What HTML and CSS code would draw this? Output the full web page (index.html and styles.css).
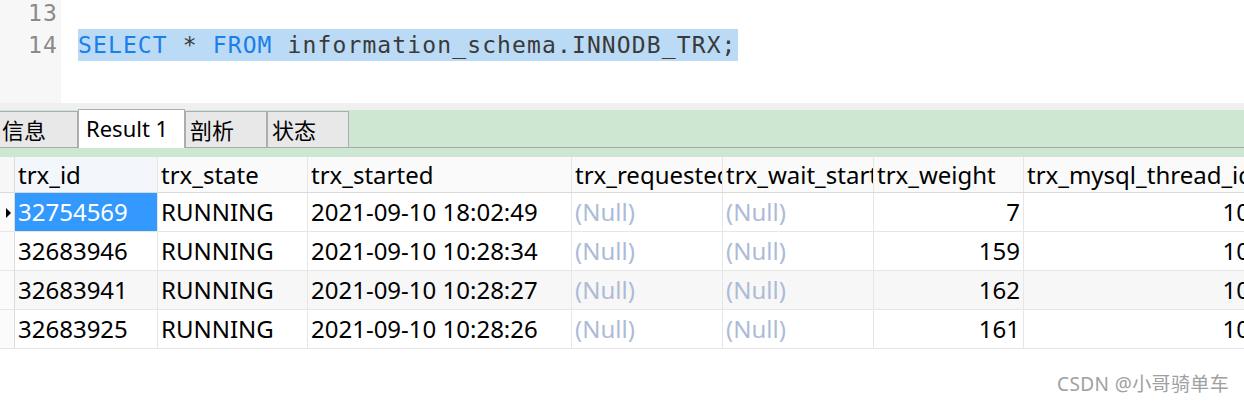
FILE: index.html
```html
<!DOCTYPE html>
<html>
<head>
<meta charset="utf-8">
<link rel="stylesheet" href="styles.css">
</head>
<body>
<div class="page">
  <div class="editor">
    <div class="gutter">
      <div class="line first">13</div>
      <div class="line">14</div>
    </div>
    <div class="code">
      <div class="line first"></div>
      <div class="line"><span class="sel"><span class="kw">SELECT</span> * <span class="kw">FROM</span> information_schema.INNODB_TRX;</span></div>
    </div>
  </div>
  <div class="sep"></div>
  <div class="tabbar">
    <div class="tab t-first">信息</div>
    <div class="tab active">Result 1</div>
    <div class="tab">剖析</div>
    <div class="tab">状态</div>
  </div>
  <div class="gap"></div>
  <div class="grid">
    <div class="row head">
      <div class="cell ind"></div>
      <div class="cell c1 hsel">trx_id</div>
      <div class="cell c2">trx_state</div>
      <div class="cell c3">trx_started</div>
      <div class="cell c4">trx_requested_lock_id</div>
      <div class="cell c5">trx_wait_started</div>
      <div class="cell c6">trx_weight</div>
      <div class="cell c7">trx_mysql_thread_id</div>
    </div>
    <div class="row">
      <div class="cell ind"><span class="arrow"></span></div>
      <div class="cell c1 selected">32754569</div>
      <div class="cell c2">RUNNING</div>
      <div class="cell c3">2021-09-10 18:02:49</div>
      <div class="cell c4 null">(Null)</div>
      <div class="cell c5 null">(Null)</div>
      <div class="cell c6 num">7</div>
      <div class="cell c7 num">10</div>
    </div>
    <div class="row">
      <div class="cell ind"></div>
      <div class="cell c1">32683946</div>
      <div class="cell c2">RUNNING</div>
      <div class="cell c3">2021-09-10 10:28:34</div>
      <div class="cell c4 null">(Null)</div>
      <div class="cell c5 null">(Null)</div>
      <div class="cell c6 num">159</div>
      <div class="cell c7 num">10</div>
    </div>
    <div class="row alt">
      <div class="cell ind"></div>
      <div class="cell c1">32683941</div>
      <div class="cell c2">RUNNING</div>
      <div class="cell c3">2021-09-10 10:28:27</div>
      <div class="cell c4 null">(Null)</div>
      <div class="cell c5 null">(Null)</div>
      <div class="cell c6 num">162</div>
      <div class="cell c7 num">10</div>
    </div>
    <div class="row">
      <div class="cell ind"></div>
      <div class="cell c1">32683925</div>
      <div class="cell c2">RUNNING</div>
      <div class="cell c3">2021-09-10 10:28:26</div>
      <div class="cell c4 null">(Null)</div>
      <div class="cell c5 null">(Null)</div>
      <div class="cell c6 num">161</div>
      <div class="cell c7 num">10</div>
    </div>
  </div>
  <div class="watermark">CSDN @小哥骑单车</div>
</div>
</body>
</html>
```

FILE: styles.css
```css
html, body {
  margin: 0;
  padding: 0;
  background: #fff;
}
.page {
  position: relative;
  width: 1244px;
  height: 403px;
  overflow: hidden;
  font-family: "Noto Sans", "Noto Sans CJK SC", sans-serif;
}
.editor {
  display: flex;
  height: 103px;
  overflow: hidden;
  font-family: "DejaVu Sans Mono", "Liberation Mono", monospace;
  font-size: 23px;
  letter-spacing: 1.12px;
}
.gutter {
  width: 61px;
  background: #f7f7f7;
  color: #8a8a8a;
  text-align: right;
  box-sizing: border-box;
  padding-right: 3px;
}
.code {
  flex: 1;
  padding-left: 17px;
  color: #3a3a3a;
}
.line {
  height: 32px;
  line-height: 33px;
  white-space: pre;
}
.line.first {
  margin-top: -3px;
}
.sel {
  display: inline-block;
  height: 32px;
  background: #bbdaf6;
  padding-right: 1px;
}
.kw {
  color: #1a7fe8;
}
.sep {
  height: 7px;
  background: #f0f0f0;
}
.tabbar {
  display: flex;
  align-items: flex-end;
  height: 37px;
  background: #cde7d3;
  border-bottom: 1px solid #a9a9a9;
}
.tab {
  box-sizing: border-box;
  width: 82px;
  height: 36px;
  line-height: 34px;
  padding-left: 4px;
  background: #e8e8e8;
  border: 1px solid #adadad;
  border-bottom: none;
  font-family: "Noto Sans CJK SC", sans-serif;
  font-size: 22px;
  color: #000;
  white-space: nowrap;
}
.tab.t-first {
  margin-left: -4px;
  padding-left: 5px;
}
.tab.active {
  width: 107px;
  height: 39px;
  line-height: 37px;
  margin-bottom: -1px;
  padding-left: 7px;
  background: #fff;
  font-family: "Noto Sans", sans-serif;
  position: relative;
  z-index: 1;
}
.gap {
  height: 9px;
  background: #cde7d3;
}
.grid {
  font-size: 24px;
  color: #000;
}
.row {
  display: flex;
  height: 39px;
  border-bottom: 1px solid #e6e6e6;
  box-sizing: border-box;
  background: #fff;
}
.row.alt {
  background: #f7f7f7;
}
.row.head {
  height: 36px;
  background: #fafafa;
  border-bottom: 1px solid #dadada;
}
.cell {
  box-sizing: border-box;
  flex: none;
  border-right: 1px solid #e6e6e6;
  padding: 0 3px 2px;
  white-space: nowrap;
  overflow: hidden;
  display: flex;
  align-items: center;
}
.head .cell {
  padding-bottom: 0;
}
.ind {
  width: 15px;
  padding: 0;
  background: #fbfbfb;
  border-right-color: #dcdcdc;
}
.head .ind {
  background: #f7f7f7;
}
.c1 { width: 143px; }
.c2 { width: 150px; }
.c3 { width: 264px; }
.c4 { width: 151px; }
.c5 { width: 151px; }
.c6 { width: 150px; }
.c7 { width: 230px; }
.hsel {
  background: #f3f7fc;
}
.selected {
  background: #3399ff;
  color: #fff;
}
.num {
  justify-content: flex-end;
}
.null {
  color: #adbbd7;
}
.arrow {
  width: 0;
  height: 0;
  border-top: 5px solid transparent;
  border-bottom: 5px solid transparent;
  border-left: 5px solid #000;
  margin-left: 6px;
  margin-top: 1px;
}
.watermark {
  position: absolute;
  left: 1057px;
  top: 369px;
  font-size: 19px;
  letter-spacing: 0.4px;
  color: #a0a0a0;
  font-family: "Noto Sans", "Noto Sans CJK SC", sans-serif;
  white-space: nowrap;
}
```
